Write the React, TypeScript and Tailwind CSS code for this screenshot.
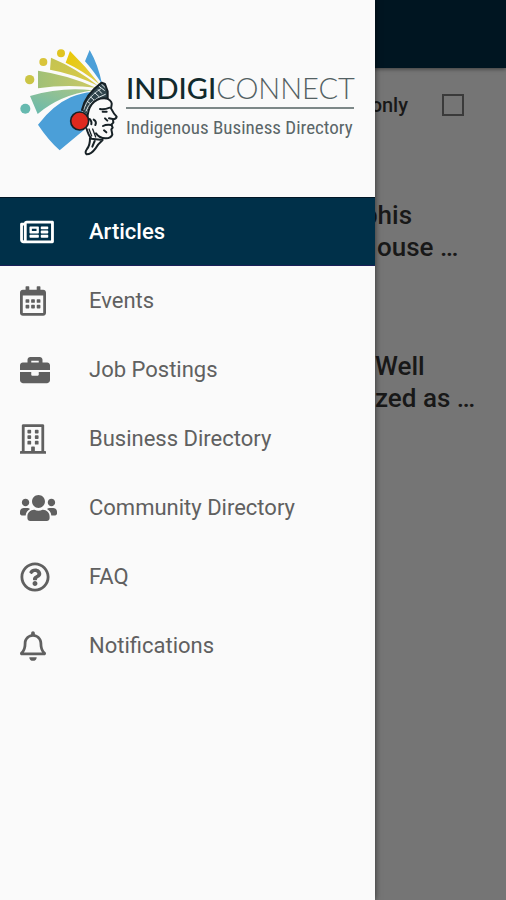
import type { ReactNode } from "react";
import {
  FaBriefcase,
  FaRegBell,
  FaRegBuilding,
  FaRegCalendarAlt,
  FaRegNewspaper,
  FaRegQuestionCircle,
  FaUsers,
} from "react-icons/fa";

type Item = { label: string; icon: ReactNode; active?: boolean };

const items: Item[] = [
  { label: "Articles", icon: <FaRegNewspaper className="h-[30px] w-[34px]" />, active: true },
  { label: "Events", icon: <FaRegCalendarAlt className="h-[30px] w-[26px]" /> },
  { label: "Job Postings", icon: <FaBriefcase className="size-[30px]" /> },
  { label: "Business Directory", icon: <FaRegBuilding className="h-[30px] w-[26px]" /> },
  { label: "Community Directory", icon: <FaUsers className="h-[30px] w-[37px]" /> },
  { label: "FAQ", icon: <FaRegQuestionCircle className="size-[30px]" /> },
  { label: "Notifications", icon: <FaRegBell className="h-[30px] w-[26px]" /> },
];

function Emblem() {
  return (
    <svg viewBox="30 24 294 330" className="h-[110px] w-[98px] shrink-0" aria-hidden="true">
      <defs>
        <linearGradient id="f1" x1="0" y1="0" x2="1" y2="1">
          <stop offset="0" stopColor="#ecc800" />
          <stop offset="1" stopColor="#dccd55" />
        </linearGradient>
        <linearGradient id="f2" x1="0" y1="0" x2="1" y2="1">
          <stop offset="0" stopColor="#c3c352" />
          <stop offset="1" stopColor="#dccb45" />
        </linearGradient>
        <linearGradient id="f3" x1="0" y1="0" x2="1" y2="0">
          <stop offset="0" stopColor="#a0c077" />
          <stop offset="1" stopColor="#cdc962" />
        </linearGradient>
        <linearGradient id="f4" x1="0" y1="1" x2="1" y2="0">
          <stop offset="0" stopColor="#66b9af" />
          <stop offset="1" stopColor="#a9c584" />
        </linearGradient>
      </defs>
      <path d="M239 30 L225 64 Q250 92 276 132 Q265 75 239 30Z" fill="#4b9fd8" />
      <path d="M180 33 L167 68 Q220 92 270 134 Q228 80 180 33Z" fill="url(#f1)" />
      <path d="M123 53 L120 89 Q195 102 265 138 Q200 85 123 53Z" fill="url(#f2)" />
      <path d="M84 92 L84 145 Q170 132 258 143 Q175 105 84 92Z" fill="url(#f3)" />
      <path d="M60 168 L83 222 Q150 165 248 151 Q155 140 60 168Z" fill="url(#f4)" />
      <path d="M84 254 Q130 195 182 172 Q215 158 246 156 Q222 190 214 222 L222 270 L149 331 Q113 298 84 254Z" fill="#4b9fd8" />
      <circle cx="153" cy="40" r="12" fill="#e0c420" />
      <circle cx="100" cy="66" r="12" fill="#d9c43a" />
      <circle cx="59" cy="119" r="14" fill="#cbc545" />
      <circle cx="46" cy="206" r="15" fill="#66b9af" />
      <path d="M218 210 Q230 165 274 130 L293 155 L293 178 L306 185 L308 203 L320 230 L311 240 L309 284 Q296 300 276 300 L250 330 L232 344 L238 292 Z" fill="#fafafa" />
      <path d="M216 213 Q223 167 262 137 L275 126 L285 132 L292 151 L294 176 Q266 171 247 190 Q233 204 230 223Z" fill="#30454c" />
      <g fill="none" stroke="#e6edee" strokeWidth="3" strokeLinecap="round">
        <path d="M222 208 Q232 172 272 147" strokeDasharray="5 3" />
        <path d="M228 213 Q238 181 286 163" />
        <path d="M233 185 L244 193M243 172 L254 182M255 159 L266 169M265 149 L275 160M267 139 L283 151M275 133 L286 143" />
      </g>
      <g fill="none" stroke="#172126" strokeWidth="6" strokeLinejoin="round" strokeLinecap="round">
        <path d="M216 210 Q224 166 275 128 L285 132 L293 154 L293 176 Q263 171 245 193 Q233 209 232 237" />
        <path d="M294 177 Q307 185 305 194 L303 205 Q311 221 320 230 Q319 237 309 238 L310 248 L304 254 L308 263 L304 268 L307 284 Q302 296 286 295 Q268 294 258 280" />
        <path d="M270 207 Q282 210 299 203M278 215 L290 215M285 235 L292 242M297 235 L308 237M279 258 Q289 252 305 255M282 271 L289 277" />
        <path d="M239 237 Q246 244 244 253M251 239 Q261 245 256 255M230 267 Q236 287 244 296 L278 300 Q264 312 256 326 Q244 343 230 343 Q223 338 231 327 Q240 317 240 295M254 303 L247 320" />
        <path d="M237 267 L245 288M248 267 L257 291" strokeWidth="4" />
      </g>
      <circle cx="209" cy="243" r="27" fill="#df291e" stroke="#172126" strokeWidth="5" />
    </svg>
  );
}

function Logo() {
  return (
    <div className="flex h-[197px] items-center gap-2 pt-2 pl-5">
      <Emblem />
      <div className="flex w-[228px] shrink-0 flex-col pt-2.5 whitespace-nowrap">
        <div className="border-b-2 border-[#7d8888] font-['Lato',sans-serif] text-[29px] leading-[38px] text-[#122a2c]">
          <span className="font-medium">INDIGI</span>
          <span className="font-light text-[#536163]">CONNECT</span>
        </div>
        <div className="font-['Roboto_Condensed','Liberation_Sans_Narrow',Roboto,sans-serif] text-[19px] leading-[38px] text-[#5a6668]">
          Indigenous Business Directory
        </div>
      </div>
    </div>
  );
}

function Drawer() {
  return (
    <aside className="absolute inset-y-0 left-0 w-[375px] bg-[#fafafa] shadow-[0_0_6px_rgba(0,0,0,0.6)]">
      <Logo />
      <nav>
        <ul>
          {items.map((item) => (
            <li key={item.label}>
              <a
                href="#"
                aria-current={item.active ? "page" : undefined}
                className={
                  item.active
                    ? "flex h-[69px] items-center border-y border-t-[#001626] border-b-[#1b2058] bg-[#003049] pl-5 font-medium text-white"
                    : "flex h-[69px] items-center pl-5 text-[#606060]"
                }
              >
                <span className="w-[69px]">{item.icon}</span>
                <span className="text-[22px]">{item.label}</span>
              </a>
            </li>
          ))}
        </ul>
      </nav>
    </aside>
  );
}

export default function App() {
  return (
    <div className="relative min-h-screen overflow-hidden bg-[#757575] font-['Roboto',sans-serif] text-[#181818]">
      <header className="h-[68px] bg-[#001521] shadow-[0_1px_4px_rgba(0,0,0,0.5)]" />
      <main>
        <label className="flex h-[74px] items-center justify-end gap-[34px] pr-[42px] text-[20px] font-medium">
          only
          <input
            type="checkbox"
            className="size-[22px] appearance-none border-2 border-[#3a3a3a]"
          />
        </label>
        <h2 className="mt-[57px] pl-[363px] text-[26px] leading-8 font-medium">
          phis
          <br />
          <span className="pl-[14px]">ouse …</span>
        </h2>
        <h2 className="mt-[87px] pl-[375px] text-[26px] leading-8 font-medium">
          Well
          <br />
          zed as …
        </h2>
      </main>
      <Drawer />
    </div>
  );
}
